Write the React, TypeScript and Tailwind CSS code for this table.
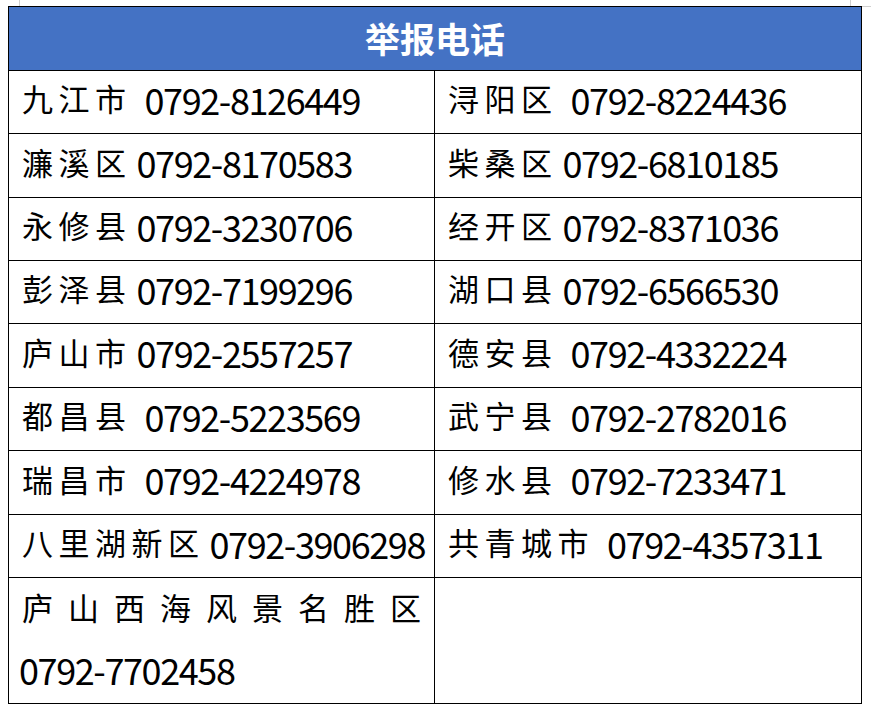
import React from 'react';

type Entry = { name: string; phone: string; space?: boolean };

type Row = { h: string; left: Entry; right: Entry };

const rows: Row[] = [
  { h: 'h-[63px]', left: { name: '九江市', phone: '0792-8126449', space: true }, right: { name: '浔阳区', phone: '0792-8224436', space: true } },
  { h: 'h-[64px]', left: { name: '濂溪区', phone: '0792-8170583' }, right: { name: '柴桑区', phone: '0792-6810185' } },
  { h: 'h-[63px]', left: { name: '永修县', phone: '0792-3230706' }, right: { name: '经开区', phone: '0792-8371036' } },
  { h: 'h-[63px]', left: { name: '彭泽县', phone: '0792-7199296' }, right: { name: '湖口县', phone: '0792-6566530' } },
  { h: 'h-[64px]', left: { name: '庐山市', phone: '0792-2557257' }, right: { name: '德安县', phone: '0792-4332224', space: true } },
  { h: 'h-[63px]', left: { name: '都昌县', phone: '0792-5223569', space: true }, right: { name: '武宁县', phone: '0792-2782016', space: true } },
  { h: 'h-[64px]', left: { name: '瑞昌市', phone: '0792-4224978', space: true }, right: { name: '修水县', phone: '0792-7233471', space: true } },
  { h: 'h-[63px]', left: { name: '八里湖新区', phone: '0792-3906298' }, right: { name: '共青城市', phone: '0792-4357311', space: true } },
];

const scenic = '庐山西海风景名胜区';

function Cell({ entry, className }: { entry: Entry; className?: string }) {
  return (
    <div className={`flex items-center whitespace-nowrap pb-[7px] ${className ?? ''}`}>
      <span className="text-[31px] tracking-[5.5px] font-['Noto_Sans_CJK_SC',sans-serif]">{entry.name}</span>
      <span className={entry.space ? 'w-[13px]' : 'w-[5px]'} />
      <span className="text-[36px] tracking-[-1.4px] font-['Noto_Sans_CJK_SC',sans-serif]">{entry.phone}</span>
    </div>
  );
}

export default function App() {
  return (
    <div className="w-[871px] h-[711px] bg-white text-black overflow-hidden">
      {/* spreadsheet gridlines peeking above the table */}
      <div className="flex h-[6px]">
        <div className="w-[19px]" />
        <div className="w-[831px] border-l border-[#d0d0d0]" />
        <div className="border-l border-[#d0d0d0]" />
      </div>

      <div className="flex">
        <div className="w-[8px]" />
        <div className="w-[854px] border border-black">
          {/* Header */}
          <div className="flex h-[63px] items-center justify-center bg-[#4472c4]">
            <span className="text-[35px] font-bold text-white font-['Noto_Sans_CJK_SC',sans-serif]">举报电话</span>
          </div>

          {rows.map((row) => (
            <div key={row.left.name} className={`grid grid-cols-[426px_1fr] border-t border-black ${row.h}`}>
              <Cell entry={row.left} className="border-r border-black pl-[13px]" />
              <Cell entry={row.right} className="pl-[13px]" />
            </div>
          ))}

          {/* Last row */}
          <div className="grid h-[126px] grid-cols-[426px_1fr] border-t border-black">
            <div className="flex flex-col justify-center border-r border-black px-[13px]">
              <div className="flex h-[61px] items-center justify-between pb-[5px] text-[31px] font-['Noto_Sans_CJK_SC',sans-serif]">
                {scenic.split('').map((ch, i) => (
                  <span key={i}>{ch}</span>
                ))}
              </div>
              <div className="-ml-[3px] flex h-[61px] items-center pb-[5px] text-[36px] tracking-[-1.4px] font-['Noto_Sans_CJK_SC',sans-serif]">
                0792-7702458
              </div>
            </div>
            <div />
          </div>
        </div>
        <div className="h-[1px] flex-1 bg-[#d0d0d0]" />
      </div>
    </div>
  );
}
